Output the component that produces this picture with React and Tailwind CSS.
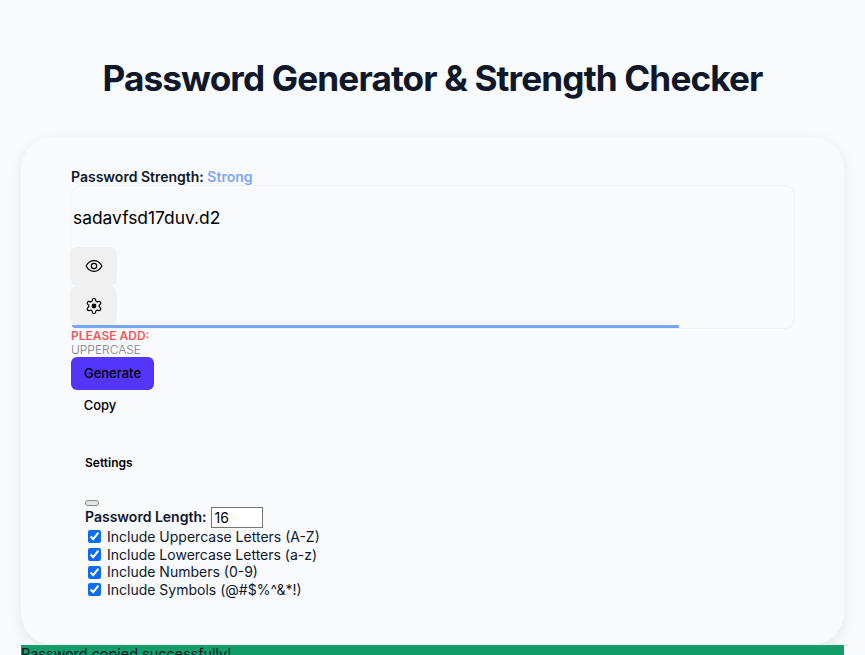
import React from 'react';

const options = [
  'Include Uppercase Letters (A-Z)',
  'Include Lowercase Letters (a-z)',
  'Include Numbers (0-9)',
  'Include Symbols (@#$%^&*!)',
];

const iconButton = 'flex h-[39px] w-[47px] -ml-[2px] items-center justify-center rounded-lg bg-[#f0f0f0] text-black';

export default function App() {
  return (
    <div className="h-[655px] overflow-hidden bg-[#f8fafc] px-[21px] font-['Inter',sans-serif] text-[#0f172a]">
      <h1 className="pt-[56px] pb-[36px] text-center text-[35.2px] leading-[45px] font-bold tracking-tight">
        Password Generator &amp; Strength Checker
      </h1>

      <div className="h-[508px] rounded-[32px] bg-[#f8fafc] px-[50px] pt-[31px] shadow-[0_4px_14px_rgba(0,0,0,0.08)]">
        <div className="h-[17px] text-sm leading-[17px] font-semibold">
          Password Strength: <span className="text-[#7ea6f8]">Strong</span>
        </div>

        <div className="h-[144px] w-[724px] rounded-[10px] border border-[#f0f2f5]">
          <div className="h-[61px] pt-[20px] pl-[1px] text-[17.4px] leading-[24px] text-black">sadavfsd17duv.d2</div>
          <button className={iconButton}>
            <svg className="-mt-[2px]" width="18" height="18" viewBox="0 0 24 24" fill="none" stroke="currentColor" strokeWidth="1.6" strokeLinecap="round" strokeLinejoin="round">
              <path d="M1.5 12C4 7.2 7.6 4.8 12 4.8s8 2.4 10.5 7.2c-2.5 4.8-6.1 7.2-10.5 7.2S4 16.800 1.500 12z" />
              <circle cx="12" cy="12" r="3.6" />
            </svg>
          </button>
          <button className={iconButton}>
            <svg width="18" height="18" viewBox="0 0 24 24" fill="none" stroke="currentColor" strokeWidth="1.6" strokeLinecap="round" strokeLinejoin="round">
              <path d="M12.22 2h-.44a2 2 0 0 0-2 2v.18a2 2 0 0 1-1 1.73l-.43.25a2 2 0 0 1-2 0l-.15-.08a2 2 0 0 0-2.73.73l-.22.38a2 2 0 0 0 .73 2.73l.15.1a2 2 0 0 1 1 1.72v.51a2 2 0 0 1-1 1.74l-.15.09a2 2 0 0 0-.73 2.73l.22.38a2 2 0 0 0 2.73.73l.15-.08a2 2 0 0 1 2 0l.43.25a2 2 0 0 1 1 1.73V20a2 2 0 0 0 2 2h.44a2 2 0 0 0 2-2v-.18a2 2 0 0 1 1-1.73l.43-.25a2 2 0 0 1 2 0l.15.08a2 2 0 0 0 2.73-.73l.22-.39a2 2 0 0 0-.73-2.73l-.15-.08a2 2 0 0 1-1-1.74v-.5a2 2 0 0 1 1-1.74l.15-.09a2 2 0 0 0 .73-2.73l-.22-.38a2 2 0 0 0-2.73-.73l-.15.08a2 2 0 0 1-2 0l-.43-.25a2 2 0 0 1-1-1.73V4a2 2 0 0 0-2-2z" />
              <circle cx="12" cy="12" r="2.400" fill="currentColor" />
            </svg>
          </button>
          <div className="h-[3px] w-[607px] rounded-bl-[9px] bg-[#76a5fb]"></div>
        </div>

        <div className="text-xs leading-[14px] font-semibold text-[#f05a5a]">PLEASE ADD:</div>
        <div className="text-xs leading-[14px] font-light text-[#7d818a]">UPPERCASE</div>

        <button className="block h-[33px] w-[83px] rounded-md bg-[#5336fa] text-[13px] font-medium text-black">Generate</button>
        <button className="block h-[32px] w-[58px] text-[13px] font-medium text-black">Copy</button>

        <div className="px-[14px]">
          <div className="pt-[34px] text-xs leading-[14px] font-semibold text-black">Settings</div>
          <button className="mt-[30px] block h-[6px] w-[14px] rounded-[3px] border border-[#8a8a8a] bg-[#e5e5e5]"></button>
          <label className="flex h-[22px] items-center text-sm font-semibold">
            Password Length:
            <input className="ml-[5px] h-[21px] w-[52px] border border-[#767676] bg-white px-[2px] text-sm font-normal text-black outline-none" defaultValue="16" readOnly />
          </label>
          {options.map((option) => (
            <label key={option} className="flex h-[17.7px] items-center text-sm text-[#0f172a]">
              <input type="checkbox" defaultChecked readOnly className="mx-[3px] h-[13px] w-[13px] accent-[#0b6bf2]" />
              <span className="ml-[3px]">{option}</span>
            </label>
          ))}
        </div>
      </div>

      <div className="h-[40px] bg-[#119e6a] text-[14.4px] leading-[17px] text-[#0f172a]">Password copied successfully!</div>
    </div>
  );
}
